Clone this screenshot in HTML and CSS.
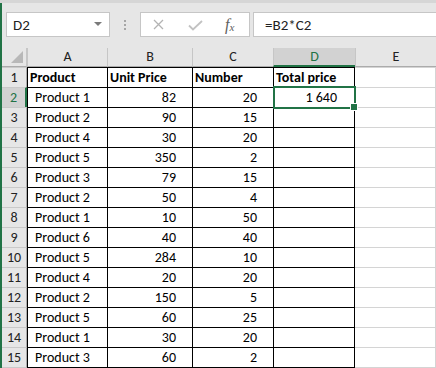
FILE: index.html
```html
<!DOCTYPE html>
<html>
<head>
<meta charset="utf-8">
<link rel="stylesheet" href="styles.css">
</head>
<body>
<div class="topstrip"></div>
<div class="main">
  <div class="fbar">
    <div class="namebox"><span class="nb-text">D2</span><span class="dd"></span></div>
    <div class="grip"><i></i><i></i><i></i></div>
    <div class="fbtns">
      <svg class="ico-x" width="11" height="11" viewBox="0 0 11 11"><path d="M1 1 L10 10 M10 1 L1 10" stroke="#b3b3b3" stroke-width="1.3" fill="none"/></svg>
      <svg class="ico-ok" width="15" height="11" viewBox="0 0 15 11"><path d="M1 5.5 L5 9.5 L14 1" stroke="#c2c2c2" stroke-width="1.8" fill="none"/></svg>
      <span class="fx">f<sub>x</sub></span>
    </div>
    <div class="finput">=B2*C2</div>
  </div>
  <div class="sheet">
    <div class="corner"><svg width="12" height="12" viewBox="0 0 12 12"><polygon points="12,0 12,12 0,12" fill="#b8b8b8"/></svg></div>
    <div class="ch">A</div><div class="ch">B</div><div class="ch">C</div><div class="ch sel-h">D</div><div class="ch">E</div>

    <div class="rh">1</div><div class="c a0 b">Product</div><div class="c t b">Unit Price</div><div class="c t b">Number</div><div class="c d t b">Total price</div><div class="e"></div>
    <div class="rh sel-r">2</div><div class="c a">Product 1</div><div class="c n">82</div><div class="c n">20</div><div class="c d n sel">1 640</div><div class="e"></div>
    <div class="rh">3</div><div class="c a">Product 2</div><div class="c n">90</div><div class="c n">15</div><div class="c d"></div><div class="e"></div>
    <div class="rh">4</div><div class="c a">Product 4</div><div class="c n">30</div><div class="c n">20</div><div class="c d"></div><div class="e"></div>
    <div class="rh">5</div><div class="c a">Product 5</div><div class="c n">350</div><div class="c n">2</div><div class="c d"></div><div class="e"></div>
    <div class="rh">6</div><div class="c a">Product 3</div><div class="c n">79</div><div class="c n">15</div><div class="c d"></div><div class="e"></div>
    <div class="rh">7</div><div class="c a">Product 2</div><div class="c n">50</div><div class="c n">4</div><div class="c d"></div><div class="e"></div>
    <div class="rh">8</div><div class="c a">Product 1</div><div class="c n">10</div><div class="c n">50</div><div class="c d"></div><div class="e"></div>
    <div class="rh">9</div><div class="c a">Product 6</div><div class="c n">40</div><div class="c n">40</div><div class="c d"></div><div class="e"></div>
    <div class="rh">10</div><div class="c a">Product 5</div><div class="c n">284</div><div class="c n">10</div><div class="c d"></div><div class="e"></div>
    <div class="rh">11</div><div class="c a">Product 4</div><div class="c n">20</div><div class="c n">20</div><div class="c d"></div><div class="e"></div>
    <div class="rh">12</div><div class="c a">Product 2</div><div class="c n">150</div><div class="c n">5</div><div class="c d"></div><div class="e"></div>
    <div class="rh">13</div><div class="c a">Product 5</div><div class="c n">60</div><div class="c n">25</div><div class="c d"></div><div class="e"></div>
    <div class="rh">14</div><div class="c a">Product 1</div><div class="c n">30</div><div class="c n">20</div><div class="c d"></div><div class="e"></div>
    <div class="rh last">15</div><div class="c a last">Product 3</div><div class="c n last">60</div><div class="c n last">2</div><div class="c d last"></div><div class="e last"></div>
  </div>
</div>
</body>
</html>
```

FILE: styles.css
```css
* { box-sizing: border-box; }
html, body { margin: 0; padding: 0; }
body {
  width: 436px;
  height: 368px;
  overflow: hidden;
  background: #e6e6e6;
  font-family: Carlito, Lato, "Liberation Sans", sans-serif;
  font-size: 14px;
  color: #000;
}
.topstrip {
  height: 3px;
  background: #d6d6d6;
}
.main {
  border-left: 2px solid #217346;
  height: 365px;
}
.fbar {
  height: 45px;
  display: flex;
  align-items: flex-start;
  padding-top: 9px;
  padding-left: 4px;
}
.namebox {
  width: 104px;
  height: 25px;
  background: #fff;
  border: 1px solid #c6c6c6;
  display: flex;
  align-items: center;
  justify-content: space-between;
  padding: 0 7px 0 6px;
  color: #222;
  font-size: 15px;
}
.dd {
  width: 0;
  height: 0;
  border-left: 4px solid transparent;
  border-right: 4px solid transparent;
  border-top: 4px solid #7a7a7a;
  margin-bottom: 2px;
}
.grip {
  width: 30px;
  height: 25px;
  display: flex;
  flex-direction: column;
  align-items: center;
  justify-content: center;
  gap: 2px;
}
.grip i {
  display: block;
  width: 2px;
  height: 2px;
  background: #a6a6a6;
}
.fbtns {
  width: 110px;
  height: 25px;
  background: #fff;
  border: 1px solid #c6c6c6;
  display: flex;
  align-items: center;
  padding-left: 12px;
}
.ico-x { margin-right: 24px; }
.ico-ok { margin-right: 22px; margin-top: 1px; }
.fx {
  font-family: "Liberation Serif", serif;
  font-style: italic;
  font-size: 16px;
  color: #606060;
  line-height: 1;
}
.fx sub {
  font-size: 11px;
  vertical-align: baseline;
  position: relative;
  top: 1px;
}
.finput {
  flex: 1;
  margin-left: 3px;
  height: 25px;
  background: #fff;
  border: 1px solid #c6c6c6;
  border-right: none;
  display: flex;
  align-items: center;
  padding-left: 11px;
  font-size: 15px;
  color: #222;
}
.sheet {
  display: grid;
  grid-template-columns: 25px 80px 85px 81px 82px 1fr;
  grid-template-rows: 19px repeat(14, 20px) 21px;
  background: #fff;
}
.corner {
  background: #e6e6e6;
  border-right: 1px solid #c6c6c6;
  border-bottom: 1px solid #ababab;
  display: flex;
  align-items: flex-end;
  justify-content: flex-end;
  padding: 0 3px 3px 0;
}
.corner svg { display: block; }
.ch {
  background: #e6e6e6;
  border-left: 1px solid #c6c6c6;
  border-bottom: 1px solid #ababab;
  text-align: center;
  line-height: 18px;
  color: #222;
}
.ch.sel-h {
  background: #d2d2d2;
  color: #217346;
  border-bottom: 2px solid #217346;
}
.rh {
  background: #e6e6e6;
  border-top: 1px solid #c9c9c9;
  border-right: 1px solid #ababab;
  text-align: center;
  line-height: 19px;
  color: #222;
}
.rh.sel-r {
  background: #d2d2d2;
  color: #217346;
  border-right: 2px solid #217346;
}
.c {
  border-top: 1px solid #000;
  border-left: 1px solid #000;
  line-height: 19px;
  white-space: nowrap;
  overflow: hidden;
}
.c.d { border-right: 1px solid #000; }
.c.last { border-bottom: 1px solid #000; }
.rh.last { border-bottom: 1px solid #c9c9c9; }
.a0 { padding-left: 2px; }
.a { padding-left: 7px; }
.t { padding-left: 2px; }
.b { font-weight: bold; }
.n { text-align: right; padding-right: 16px; }
.c.d.n { padding-right: 17px; }
.e {
  border-top: 1px solid #d4d4d4;
  border-right: 1px solid #d4d4d4;
}
.e.last { border-bottom: 1px solid #d4d4d4; }
.sel { position: relative; overflow: visible; }
.sel::after {
  content: "";
  position: absolute;
  left: -1px;
  top: -2px;
  right: -2px;
  bottom: -2px;
  border: 2px solid #217346;
}
.sel::before {
  content: "";
  position: absolute;
  right: -4px;
  bottom: -4px;
  width: 6px;
  height: 6px;
  background: #217346;
  border: 1px solid #fff;
  z-index: 2;
}
```
